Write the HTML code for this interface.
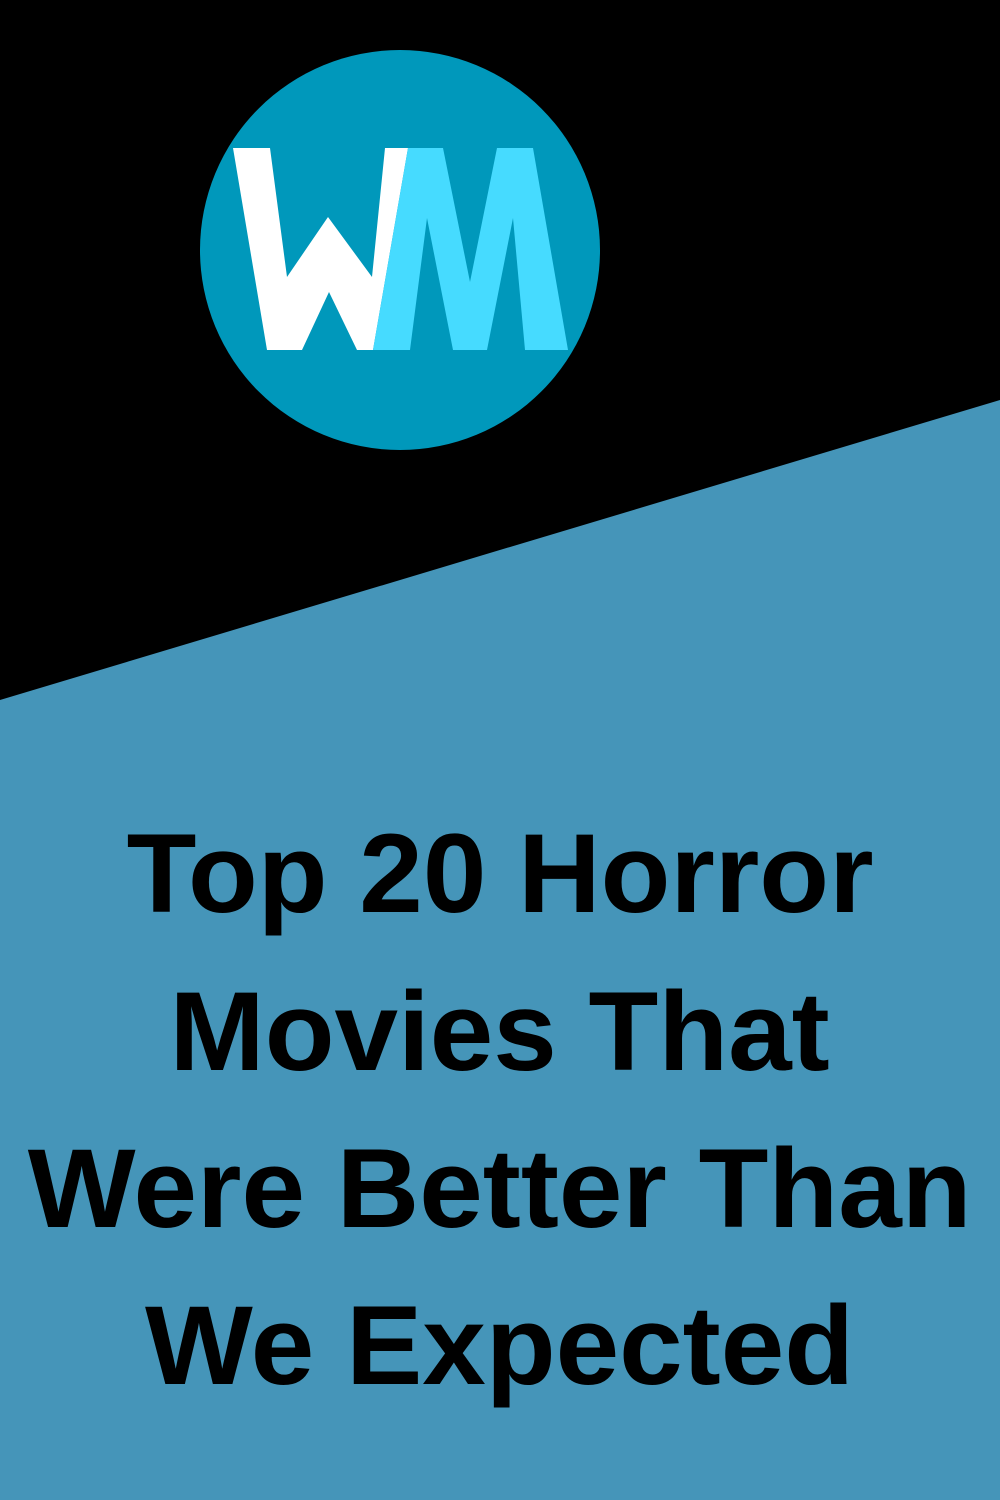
<!DOCTYPE html>
<html><head><meta charset="utf-8"><style>
html,body{margin:0;padding:0}
body{width:1000px;height:1500px;position:relative;overflow:hidden;background:#000}
svg{position:absolute;left:0;top:0}
.t{position:absolute;left:0;width:1000px;text-align:center;font-family:"Liberation Sans",sans-serif;font-weight:bold;font-size:112px;color:#000;line-height:1;white-space:nowrap}
.t span{display:inline-block;transform:scaleX(1.02);transform-origin:center}
</style></head><body>
<svg width="1000" height="1500">
<polygon points="0,700 1000,400 1000,1500 0,1500" fill="#4595b9"/>
<circle cx="400" cy="250" r="200" fill="#0098bb"/>
<polygon points="233,148 270,148 287,277 328,217 372,277 385,148 408,148 373,350 357,350 329,292 302,350 267,350" fill="#ffffff"/>
<polygon points="373,350 408,148 443,148 470,282 497,148 533,148 568,350 525,350 513,218 487,350 453,350 427,218 410,350" fill="#46dbff"/>
</svg>
<div class="t" style="top:818px"><span>Top 20 Horror</span></div>
<div class="t" style="top:976px"><span>Movies That</span></div>
<div class="t" style="top:1133px"><span>Were Better Than</span></div>
<div class="t" style="top:1290px"><span>We Expected</span></div>
</body></html>
